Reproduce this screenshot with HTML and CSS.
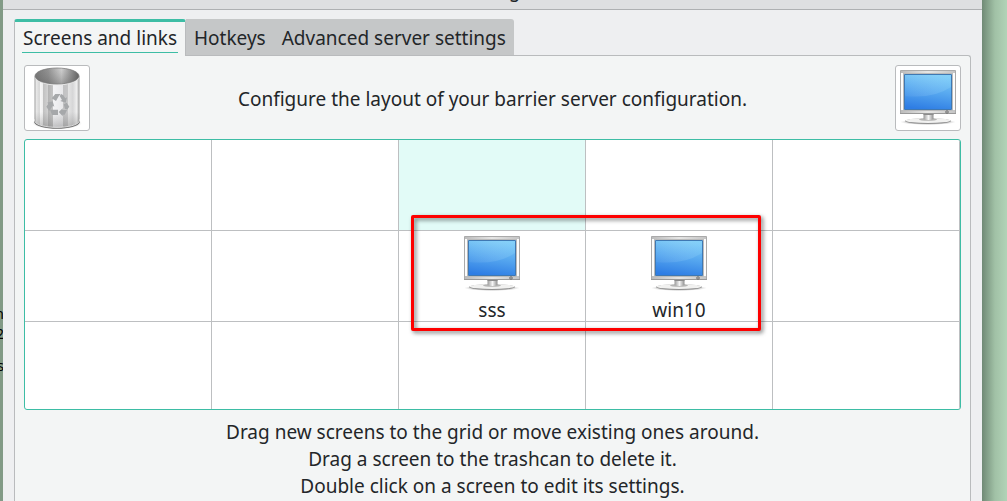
FILE: index.html
```html
<!DOCTYPE html>
<html lang="en">
<head>
<meta charset="utf-8">
<title>Server Configuration</title>
<link rel="stylesheet" href="styles.css">
</head>
<body>
<svg class="defs" aria-hidden="true">
  <defs>
    <linearGradient id="screen" x1="0.6" y1="0" x2="0.4" y2="1"><stop offset="0" stop-color="#7ccbf7"/><stop offset="0.5" stop-color="#55a6ef"/><stop offset="1" stop-color="#2e7de4"/></linearGradient>
    <linearGradient id="shine" x1="0" y1="0" x2="1" y2="0"><stop offset="0" stop-color="#fff" stop-opacity="0.04"/><stop offset="1" stop-color="#9ee0ff" stop-opacity="0.2"/></linearGradient>
    <linearGradient id="bezel" x1="0" y1="0" x2="1" y2="0"><stop offset="0" stop-color="#bbb"/><stop offset="0.5" stop-color="#e6e6e5"/><stop offset="1" stop-color="#c4c4c4"/></linearGradient>
    <linearGradient id="neck" x1="0" y1="0" x2="1" y2="0"><stop offset="0" stop-color="#9a9a9a"/><stop offset="0.5" stop-color="#f5f5f5"/><stop offset="1" stop-color="#8f8f8f"/></linearGradient>
    <radialGradient id="shadow"><stop offset="0" stop-color="#777" stop-opacity="0.9"/><stop offset="0.7" stop-color="#999" stop-opacity="0.6"/><stop offset="1" stop-color="#ccc" stop-opacity="0"/></radialGradient>
    <symbol id="monitor" viewBox="0 0 56 55">
      <ellipse cx="28" cy="52" rx="28" ry="3" fill="url(#shadow)"/>
      <ellipse cx="28" cy="51" rx="23" ry="2.800" fill="#858585"/>
      <ellipse cx="28" cy="50.500" rx="22.500" ry="2.500" fill="#f1f1f0"/>
      <ellipse cx="28" cy="49.500" rx="9" ry="1.300" fill="#b5b5b4"/>
      <path d="M23.500 44h10v5q-5 2-10 0z" fill="url(#neck)"/>
      <path d="M23.500 44h10v1h-10z" fill="#8c8c8c"/>
      <path d="M0.500 0.500h55v43h-55z" fill="url(#bezel)" stroke="#aaa"/>
      <path d="M1 3h2v37h-2zM53 3h2v37h-2z" fill="#fcfcfc"/>
      <path d="M3.500 3.500h49v37h-49z" fill="#dce9ed" stroke="#bbb"/>
      <path d="M4.500 4.500h47v35h-47z" fill="url(#screen)" stroke="#3f78b2"/>
      <path d="M5 26q28 3 46-9v-12h-46z" fill="url(#shine)"/>
      <path d="M0 43.500h56" stroke="#999"/>
      <circle cx="47" cy="42" r="1.300" fill="#bbb" stroke="#666" stroke-width="0.800"/>
    </symbol>
    <linearGradient id="metal" x1="0" y1="0" x2="1" y2="0">
      <stop offset="0" stop-color="#9b9b9b"/><stop offset="0.040" stop-color="#e8e8e8"/><stop offset="0.110" stop-color="#d5d5d5"/><stop offset="0.120" stop-color="#f8f8f8"/><stop offset="0.190" stop-color="#eee"/><stop offset="0.200" stop-color="#c2c2c2"/><stop offset="0.290" stop-color="#d0d0d0"/><stop offset="0.300" stop-color="#b2b2b2"/><stop offset="0.410" stop-color="#c4c4c4"/><stop offset="0.420" stop-color="#f3f3f5"/><stop offset="0.630" stop-color="#e8e8ea"/><stop offset="0.640" stop-color="#c2c2c3"/><stop offset="0.740" stop-color="#c6c6c7"/><stop offset="0.750" stop-color="#e4e4e4"/><stop offset="0.850" stop-color="#d6d6d7"/><stop offset="0.940" stop-color="#efefef"/><stop offset="1" stop-color="#999"/>
    </linearGradient>
    <linearGradient id="inside" x1="0" y1="0" x2="1" y2="0"><stop offset="0" stop-color="#777"/><stop offset="0.300" stop-color="#929292"/><stop offset="0.600" stop-color="#d0d0d0"/><stop offset="1" stop-color="#606060"/></linearGradient>
    <linearGradient id="depth" x1="0" y1="0" x2="0" y2="1"><stop offset="0" stop-color="#777" stop-opacity="0"/><stop offset="1" stop-color="#555" stop-opacity="0.400"/></linearGradient>
    <linearGradient id="lower" x1="0" y1="0" x2="0" y2="1"><stop offset="0.700" stop-color="#777" stop-opacity="0"/><stop offset="1" stop-color="#666" stop-opacity="0.350"/></linearGradient>
  </defs>
</svg>

<div class="backdrop-text" aria-hidden="true"><span>n</span><span>2</span><span>s</span></div>

<main class="window">
  <header class="titlebar"><span class="title">Server Configuration</span></header>
  <div class="content">
    <div class="tabs" role="tablist">
      <button class="tab active" role="tab" aria-selected="true"><span class="tab-label">Screens and links</span></button>
      <button class="tab" role="tab" aria-selected="false"><span class="tab-label">Hotkeys</span></button>
      <button class="tab last" role="tab" aria-selected="false"><span class="tab-label">Advanced server settings</span></button>
    </div>
    <section class="pane" role="tabpanel">
      <div class="intro">
        <div class="well">
          <svg class="trash" viewBox="0 0 64 64" role="img" aria-label="Trashcan">
            <ellipse cx="32" cy="57" rx="25" ry="6.500" fill="url(#shadow)"/>
            <path d="M9 53v3c2 9 44 9 46 0v-3z" fill="#707070"/>
            <path d="M9.500 10v44.500c2 9 43 9 45 0V10z" fill="url(#metal)"/>
            <path d="M9.500 10v44.500c2 9 43 9 45 0V10z" fill="url(#lower)"/>
            <path d="M9.500 53v2c3 8.500 42 8.500 45 0v-2" fill="none" stroke="#eee" stroke-width="0.800"/>
            <ellipse cx="32" cy="10.500" rx="22.500" ry="8.800" fill="#e9e9e9"/>
            <ellipse cx="32" cy="10" rx="22" ry="8" fill="url(#inside)" stroke="#777" stroke-width="0.700"/>
            <ellipse cx="32" cy="10" rx="21.500" ry="7.700" fill="url(#depth)"/>
            <g fill="#a6a8aa">
              <path d="M26.700 32.300L30.300 28h5.400l-2 2.300L31 35z"/>
              <path d="M36.300 28l2 1.300 2 3 1.700-1-1.300 5.400-5.400-1.700 1.700-1-2.300-4z"/>
              <path d="M22 36.700l5.700-1.400 1.600 5.400-1.600-1-3.400 5.300-3-4.300 2-3z"/>
              <path d="M25 43.700h8V49h-6z"/>
              <path d="M33.700 46l4-3.700V44H42l-2.300 4.700h-2v1.600z"/>
              <path d="M38.700 38.300l3-1.600 2.600 4-2 2.800-2.300-.5z"/>
            </g>
          </svg>
        </div>
        <p class="intro-text">Configure the layout of your barrier server configuration.</p>
        <div class="well"><svg class="monitor" role="img" aria-label="New screen"><use href="#monitor"/></svg></div>
      </div>

      <div class="screens">
        <div class="cell"></div><div class="cell"></div><div class="cell selected"></div><div class="cell"></div><div class="cell"></div>
        <div class="cell"></div><div class="cell"></div>
        <div class="cell"><svg class="monitor" aria-hidden="true"><use href="#monitor"/></svg><span class="name">sss</span></div>
        <div class="cell"><svg class="monitor" aria-hidden="true"><use href="#monitor"/></svg><span class="name">win10</span></div>
        <div class="cell"></div>
        <div class="cell"></div><div class="cell"></div><div class="cell"></div><div class="cell"></div><div class="cell"></div>
        <div class="highlight"></div>
      </div>

      <div class="help">
        <p>Drag new screens to the grid or move existing ones around.</p>
        <p>Drag a screen to the trashcan to delete it.</p>
        <p>Double click on a screen to edit its settings.</p>
      </div>
    </section>
  </div>
</main>
</body>
</html>
```

FILE: styles.css
```css
* {
  box-sizing: border-box;
}

body {
  display: flex;
  min-height: 100vh;
  margin: 0;
  padding: 0 25px 0 3px;
  overflow: hidden;
  background: linear-gradient(to left, #b2d3b7, #a1c1a6 12px, #708a76 25px, #829a86 26px);
  color: #232629;
  font: 19px/27px "Noto Sans", sans-serif;
}

p {
  margin: 0;
}

.defs {
  position: absolute;
  width: 0;
  height: 0;
}

.backdrop-text {
  display: grid;
  position: absolute;
  top: 304px;
  left: 0;
  grid-template-rows: 20px 32px 20px;
  width: 3px;
  overflow: hidden;
  color: #000;
  font-size: 14px;
  line-height: 20px;
}

.backdrop-text span {
  width: 4px;
  direction: rtl;
}

.window {
  display: flex;
  flex: 1;
  flex-direction: column;
  min-width: 0;
  background: #eeeff1;
}

.titlebar {
  display: flex;
  align-items: flex-end;
  justify-content: center;
  height: 10px;
  overflow: hidden;
  border-bottom: 1px solid #aeb0b2;
  background: #dedfe1;
}

.title {
  padding-bottom: 5px;
}

.content {
  display: flex;
  flex: 1;
  flex-direction: column;
  padding: 9px 11px 0;
}

.tabs {
  display: flex;
  z-index: 1;
}

.tab {
  height: 37px;
  margin: 0;
  padding: 5px 8px 2px;
  border: 0;
  border-bottom: 1px solid #b9bbbd;
  background: #c5c7c8;
  color: inherit;
  font: inherit;
}

.tab.active {
  padding: 2px 7px 3px;
  border-top: 3px solid #3dbda5;
  border-right: 1px solid #b9bbbd;
  border-bottom: 0;
  border-left: 1px solid #b9bbbd;
  border-radius: 3px 3px 0 0;
  background: #f3f5f5;
}

.tab.last {
  border-radius: 0 3px 0 0;
}

.tab-label {
  display: block;
  height: 29px;
  line-height: 29px;
}

.active .tab-label {
  min-width: 156px;
  border-bottom: 1px solid #3dbda5;
}

.pane {
  display: flex;
  flex: 1;
  flex-direction: column;
  gap: 8px;
  margin-top: -1px;
  padding: 9px;
  border: 1px solid #b9bbbd;
  border-bottom: 0;
  border-top-right-radius: 3px;
  background: #f3f5f5;
}

.intro {
  display: flex;
  align-items: center;
  justify-content: space-between;
}

.intro-text {
  padding-top: 2px;
}

.well {
  display: flex;
  justify-content: center;
  width: 66px;
  height: 66px;
  border: 1px solid #b9bbbd;
  border-radius: 3px;
  background: #fff;
}

.trash {
  width: 64px;
  height: 64px;
}

.monitor {
  flex: none;
  width: 56px;
  height: 55px;
}

.well .monitor {
  margin-top: 4px;
}

.screens {
  display: grid;
  position: relative;
  grid-template-rows: 91px 91px 87px;
  grid-template-columns: repeat(5, 1fr);
  overflow: hidden;
  border: 1px solid #3dbda5;
  border-radius: 3px;
  background: #fff;
}

.cell {
  display: flex;
  flex-direction: column;
  align-items: center;
  gap: 6px;
  padding-top: 5px;
  border-right: 1px solid #bdbfc1;
  border-bottom: 1px solid #bdbfc1;
}

.cell:nth-child(n + 11) {
  border-bottom: 0;
}

.cell.selected {
  background: #e2fbf7;
}

.highlight {
  position: absolute;
  top: 75px;
  left: 386px;
  width: 350px;
  height: 116px;
  border: 3px solid #fe0000;
  border-radius: 2px;
  filter: drop-shadow(2px 2px 2px #0008);
}

.help {
  padding-top: 1px;
  text-align: center;
}
```
